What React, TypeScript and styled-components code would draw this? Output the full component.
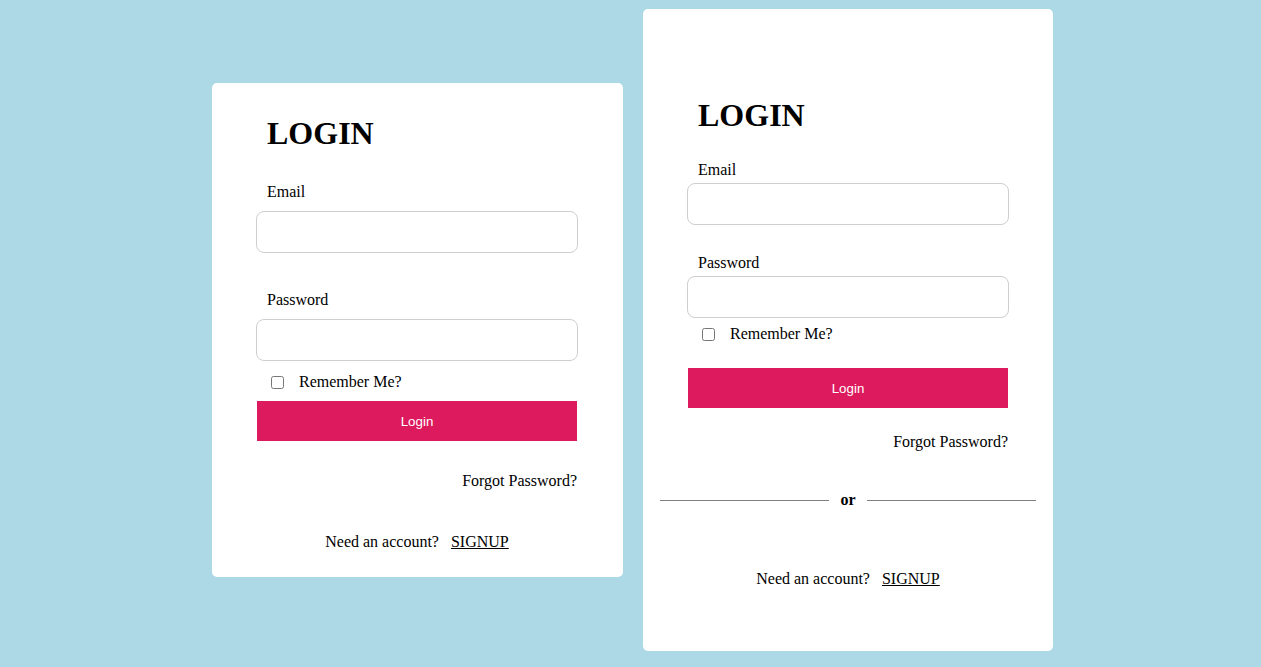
import React from "react";
import styled, { createGlobalStyle } from "styled-components";

const GlobalStyle = createGlobalStyle`
  html, body {
    margin: 0;
    padding: 0;
    background: #add8e6;
  }
  body {
    font-family: "Liberation Serif", "Times New Roman", serif;
    font-size: 16px;
    color: #000;
  }
  * { box-sizing: border-box; }
`;

const Page = styled.main`
  height: 660px;
  display: flex;
  align-items: center;
  justify-content: center;
  gap: 20px;
  padding-left: 4px;
`;

type CardProps = { $width: number; $pt: number; $pb: number; $pl: number; $pr: number };

const Card = styled.form<CardProps>`
  width: ${(p) => p.$width}px;
  background: #fff;
  border-radius: 5px;
  padding: ${(p) => `${p.$pt}px ${p.$pr}px ${p.$pb}px ${p.$pl}px`};
  display: flex;
  flex-direction: column;
`;

const Title = styled.h1`
  margin: 0 0 0 11px;
  font-size: 32px;
  line-height: 37px;
  font-weight: bold;
`;

const Label = styled.label<{ $mt: number }>`
  display: block;
  margin: ${(p) => p.$mt}px 0 0 11px;
  line-height: 18px;
`;

const Input = styled.input<{ $mt: number }>`
  display: block;
  width: 100%;
  height: 42px;
  margin-top: ${(p) => p.$mt}px;
  border: 1px solid #cfcfcf;
  border-radius: 8px;
  padding: 0 10px;
  font-size: 16px;
  outline: none;
`;

const CheckRow = styled.div<{ $mt: number }>`
  display: flex;
  align-items: center;
  height: 18px;
  margin-top: ${(p) => p.$mt}px;
  line-height: 18px;
`;

const Check = styled.input`
  width: 13px;
  height: 13px;
  margin: 0 0 0 15px;
`;

const CheckText = styled.span`
  margin-left: 15px;
`;

const Button = styled.button<{ $mt: number }>`
  display: block;
  width: 320px;
  height: 40px;
  margin: ${(p) => p.$mt}px auto 0;
  border: none;
  background: #dd1a5d;
  color: #fff;
  font-family: "Liberation Sans", Arial, sans-serif;
  font-size: 13.333px;
  cursor: pointer;
`;

const Forgot = styled.div<{ $mt: number }>`
  margin-top: ${(p) => p.$mt}px;
  padding-right: 1px;
  text-align: right;
  line-height: 18px;
`;

const Divider = styled.div<{ $mt: number }>`
  display: flex;
  align-items: center;
  gap: 11px;
  margin: ${(p) => p.$mt}px -27px 0;
  height: 18px;
  font-weight: bold;
  &::before,
  &::after {
    content: "";
    flex: 1;
    height: 1px;
    background: #808080;
  }
`;

const Signup = styled.div<{ $mt: number }>`
  display: flex;
  justify-content: center;
  gap: 12px;
  margin-top: ${(p) => p.$mt}px;
  line-height: 18px;
`;

const SignupLink = styled.a`
  color: #000;
  text-decoration: underline;
`;

export default function App() {
  return (
    <>
      <GlobalStyle />
      <Page>
        <Card $width={411} $pt={32} $pb={26} $pl={44} $pr={45} onSubmit={(e) => e.preventDefault()}>
          <Title>LOGIN</Title>
          <Label $mt={31}>Email</Label>
          <Input $mt={10} type="email" />
          <Label $mt={38}>Password</Label>
          <Input $mt={10} type="password" />
          <CheckRow $mt={12}>
            <Check type="checkbox" />
            <CheckText>Remember Me?</CheckText>
          </CheckRow>
          <Button $mt={10} type="submit">Login</Button>
          <Forgot $mt={31}>Forgot Password?</Forgot>
          <Signup $mt={43}>
            <span>Need an account?</span>
            <SignupLink href="#">SIGNUP</SignupLink>
          </Signup>
        </Card>
        <Card $width={410} $pt={88} $pb={63} $pl={44} $pr={44} onSubmit={(e) => e.preventDefault()}>
          <Title>LOGIN</Title>
          <Label $mt={27}>Email</Label>
          <Input $mt={4} type="email" />
          <Label $mt={29}>Password</Label>
          <Input $mt={4} type="password" />
          <CheckRow $mt={7}>
            <Check type="checkbox" />
            <CheckText>Remember Me?</CheckText>
          </CheckRow>
          <Button $mt={25} type="submit">Login</Button>
          <Forgot $mt={25}>Forgot Password?</Forgot>
          <Divider $mt={40}>or</Divider>
          <Signup $mt={61}>
            <span>Need an account?</span>
            <SignupLink href="#">SIGNUP</SignupLink>
          </Signup>
        </Card>
      </Page>
    </>
  );
}
